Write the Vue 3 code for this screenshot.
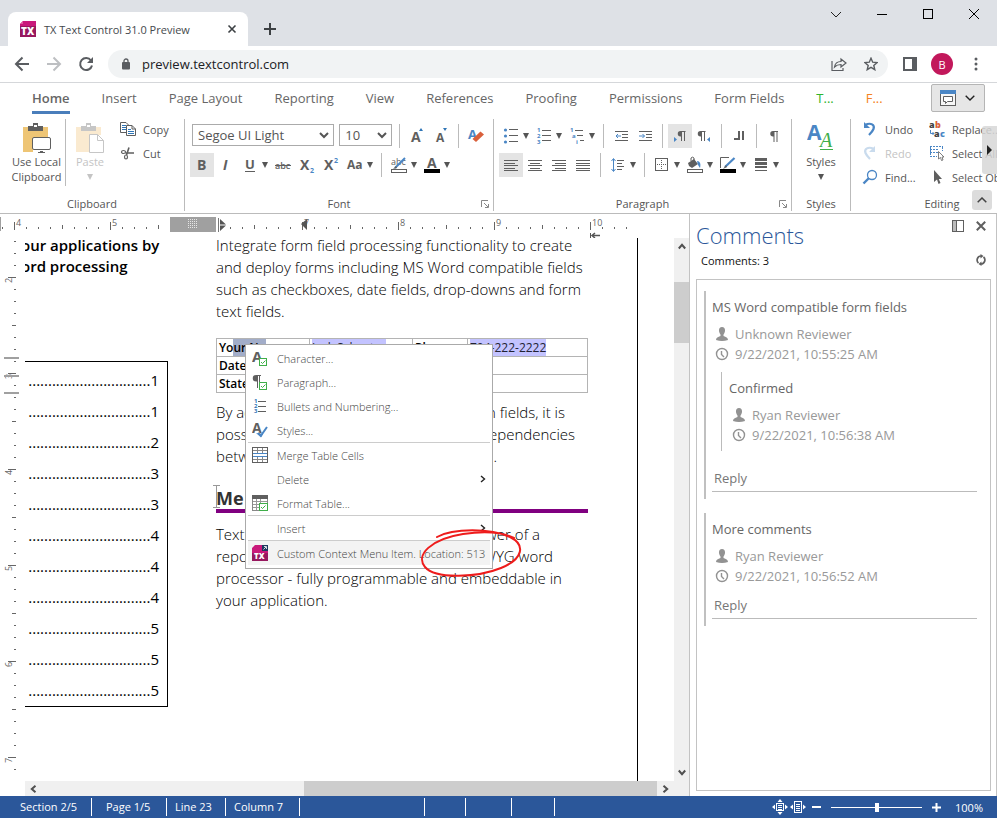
<script setup>
import { h, ref } from 'vue'

const G = '#5f5f5f'
const B = '#2e75b6'
const lines = (list, c = G) =>
  list.map(([x, y, w]) => `<rect x="${x}" y="${y}" width="${w}" height="1" fill="${c}"/>`).join('')

const icons = {
  logo: [16, 16, `<path d="M3 0H16V16H0V3z" fill="#c9197b"/><path d="M0 5H16V16H0z" fill="#97185f"/><path d="M0 3L3 0V3z" fill="#e3579f"/><text x="1" y="14" font-size="10" font-weight="800" fill="#fff">TX</text>`],
  logoDoc: [16, 16, `<path d="M3 0H11V4H16V16H0V3z" fill="#c9197b"/><path d="M0 8H16V16H0z" fill="#97185f"/><rect x="10" y="0" width="6" height="6" fill="#1e3a5f"/><path d="M11.500 4.500L14 2M12 1.500h2.500V4" stroke="#fff" fill="none" stroke-width=".8"/><text x="2" y="14" font-size="8" font-weight="800" fill="#fff">TX</text>`],
  tabClose: [10, 10, `<path d="M1.500 1.500L8.500 8.500M8.500 1.500L1.500 8.500" stroke="#3c4043" stroke-width="1.600"/>`],
  plus: [12, 12, `<path d="M6 0V12M0 6H12" stroke="#3c4043" stroke-width="2"/>`],
  winDown: [12, 12, `<path d="M1 4L6 9L11 4" fill="none" stroke="#222"/>`],
  winMin: [12, 12, `<rect x="1" y="6" width="10" height="1" fill="#000"/>`],
  winMax: [12, 12, `<rect x="1.500" y="1.500" width="9" height="9" fill="none" stroke="#000"/>`],
  winClose: [12, 12, `<path d="M1 1L11 11M11 1L1 11" stroke="#000"/>`],
  back: [16, 16, `<path d="M15 8H2M8.500 1.500L2 8L8.500 14.500" fill="none" stroke="#5a5d61" stroke-width="2"/>`],
  forward: [16, 16, `<path d="M1 8H14M7.500 1.500L14 8L7.500 14.500" fill="none" stroke="#bdbfc2" stroke-width="2"/>`],
  reload: [16, 16, `<path d="M13 4.500A6 6 0 1 0 14 9.500" fill="none" stroke="#5a5d61" stroke-width="2"/><path d="M15 1V7H9z" fill="#5a5d61"/>`],
  lock: [10, 12, `<rect x="1" y="4" width="8" height="7.500" rx="1" fill="#5a5d61"/><path d="M3 5V3a2 2 0 0 1 4 0V5" fill="none" stroke="#5a5d61" stroke-width="1.300"/>`],
  share: [16, 16, `<path d="M1 5V14.500H12V12" fill="none" stroke="#5a5d61" stroke-width="1.200"/><path d="M3.500 11C4 7.500 6.500 5.500 10 5.500V3L15 7L10 11V8.500C7.500 8.500 5.500 9 3.500 11z" fill="none" stroke="#5a5d61" stroke-width="1.200"/>`],
  star: [14, 14, `<path d="M7 1.200L8.700 5.200L13 5.600L9.800 8.400L10.800 12.700L7 10.400L3.200 12.700L4.200 8.400L1 5.600L5.300 5.200z" fill="none" stroke="#5a5d61" stroke-width="1.400"/>`],
  side: [14, 14, `<rect x="1" y="1" width="12" height="12" fill="none" stroke="#5a5d61" stroke-width="2"/><rect x="9" y="1" width="4" height="12" fill="#5a5d61"/>`],
  dots: [4, 14, `<circle cx="2" cy="2" r="1.500" fill="#5a5d61"/><circle cx="2" cy="7" r="1.500" fill="#5a5d61"/><circle cx="2" cy="12" r="1.500" fill="#5a5d61"/>`],
  comment: [16, 16, `<rect x=".5" y=".5" width="15" height="15" fill="#f6f6f6" stroke="${G}"/><rect width="16" height="4" fill="#4a86c5"/><path d="M3.500 6.500H12.500V11.500H7.500L5.500 13.500V11.500H3.500z" fill="#fff" stroke="${G}"/>`],
  chev: [10, 6, `<path d="M.7 .7L5 5L9.300 .7" fill="none" stroke="#222" stroke-width="1.400"/>`],
  selChev: [10, 7, `<path d="M1 1L5 5L9 1" fill="none" stroke="#555" stroke-width="2"/>`],
  up: [10, 6, `<path d="M.7 5.300L5 1L9.300 5.300" fill="none" stroke="#444" stroke-width="1.500"/>`],
  clip: [28, 30, `<path d="M0 4H25V15H10V29H0z" fill="#eec575"/><path d="M5 3H10V0H15V3H20V8H5z" fill="${G}"/><rect x="11" y="2" width="3" height="2" fill="#fff"/><rect x="9.500" y="14.500" width="18" height="12" rx="1.500" fill="#fff" stroke="${G}"/><path d="M15 29.500h7" stroke="${G}"/><path d="M17 28.500h3" stroke="${G}"/>`],
  paste: [28, 30, `<path d="M0 4H25V12H13V29H0z" fill="#faead0"/><path d="M5 3H10V0H15V3H20V8H5z" fill="#c6c6c6"/><rect x="11" y="2" width="3" height="2" fill="#fff"/><path d="M13.500 11.500H21.500L27.500 17.500V29.500H13.500zM21.500 11.500V17.500H27.500" fill="#fff" stroke="#c6c6c6"/>`],
  copy: [16, 16, `<path d="M.5 1.500H6L8.500 4V11.500H.5z" fill="#fff" stroke="${G}"/>${lines([[2, 4, 4], [2, 6, 4], [2, 8, 4]], B)}<path d="M6.500 4.500H12L15.500 8V14.500H6.500z" fill="#fff" stroke="${G}"/><path d="M12 4.500V8H15.500" fill="none" stroke="${G}"/>${lines([[8, 8, 3], [8, 10, 6], [8, 12, 6]], B)}`],
  cut: [16, 16, `<ellipse cx="3.500" cy="7" rx="2" ry="1.500" fill="none" stroke="${G}" stroke-width="1.200"/><ellipse cx="6" cy="12" rx="1.500" ry="2" fill="none" stroke="${G}" stroke-width="1.200"/><path d="M5.500 8H14M6.500 10L9 2.500" stroke="${G}" stroke-width="1.600"/>`],
  grow: [18, 18, `<text x="3" y="15" font-size="14" font-weight="700" fill="${G}">A</text><path d="M11 4L13 1L15 4z" fill="${B}"/>`],
  shrink: [18, 18, `<text x="4" y="15" font-size="12" font-weight="700" fill="${G}">A</text><path d="M11 1L13 4L15 1z" fill="${B}"/>`],
  clear: [18, 18, `<text x="1" y="12" font-size="13" font-weight="700" fill="#4a86c5">A</text><path d="M5.500 12L13.500 4.500L17 7.500L9 15z" fill="#d9603b"/>`],
  bold: [18, 18, `<text x="4" y="14" font-size="14" font-weight="700" fill="${G}">B</text>`],
  italic: [18, 18, `<text x="6" y="14" font-size="14" font-weight="700" font-style="italic" fill="${G}">I</text>`],
  under: [18, 18, `<text x="4" y="13" font-size="13" font-weight="700" fill="${G}">U</text><rect x="4" y="15" width="10" height="1" fill="${G}"/>`],
  strike: [18, 18, `<text x="1" y="13" font-size="9" font-weight="600" fill="${G}">abc</text><rect x="1" y="9" width="16" height="1" fill="${G}"/>`],
  sub: [18, 18, `<text x="2" y="14" font-size="14" font-weight="700" fill="${G}">X</text><text x="12" y="17" font-size="7" font-weight="700" fill="#4a86c5">2</text>`],
  sup: [18, 18, `<text x="2" y="14" font-size="14" font-weight="700" fill="${G}">X</text><text x="12" y="7" font-size="7" font-weight="700" fill="#4a86c5">2</text>`],
  aa: [18, 18, `<text x="1" y="13" font-size="12" font-weight="700" fill="${G}">Aa</text>`],
  hilite: [18, 18, `<text x="1" y="9" font-size="9" fill="${G}">abc</text><path d="M5 12L15 2" stroke="#4a86c5" stroke-width="2"/><path d="M3 13L6 10L7 12z" fill="${G}"/><rect x="1.500" y="13.500" width="15" height="3" fill="#fff" stroke="${G}"/>`],
  color: [18, 18, `<text x="4" y="12" font-size="14" font-weight="700" fill="${G}">A</text><rect x="1" y="13" width="16" height="4" fill="#000"/>`],
  bullets: [18, 18, `<g fill="#4a86c5"><circle cx="3.500" cy="3" r="1.600"/><circle cx="3.500" cy="9" r="1.600"/><circle cx="3.500" cy="15" r="1.600"/></g>${lines([[7, 2, 9], [7, 8, 9], [7, 14, 9]])}`],
  numbers: [18, 18, `<g font-size="6" font-weight="700" fill="#4a86c5"><text x="2" y="5">1</text><text x="2" y="11">2</text><text x="2" y="17">3</text></g>${lines([[7, 3, 9], [7, 8, 9], [7, 13, 9]])}`],
  multi: [18, 18, `<g font-size="6" font-weight="700" fill="#4a86c5"><text x="2" y="5">1</text><text x="4" y="11">a</text><text x="8" y="17">i</text></g>${lines([[7, 3, 8], [9, 8, 6], [12, 13, 4]])}`],
  outdent: [18, 18, `${lines([[3, 4, 13], [10, 7, 6], [10, 10, 6], [3, 13, 13]])}<path d="M9 9H4M6 7L4 9L6 11" fill="none" stroke="#4a86c5"/>`],
  indent: [18, 18, `${lines([[3, 4, 13], [10, 7, 6], [10, 10, 6], [3, 13, 13]])}<path d="M3 9H8.500M6.500 7L8.500 9L6.500 11" fill="none" stroke="#4a86c5"/>`],
  ltr: [18, 18, `<path d="M14.500 4H9.500A2.700 2.700 0 0 0 9.500 9.500H10V14H11V5H13V14H14V5H14.500z" fill="${G}"/><path d="M3 10V15L6 12.500z" fill="#4a86c5"/>`],
  rtl: [18, 18, `<path d="M10.500 4H5.500A2.700 2.700 0 0 0 5.500 9.500H6V14H7V5H9V14H10V5H10.500z" fill="${G}"/><path d="M15 10V15L12 12.500z" fill="#4a86c5"/>`],
  tabs: [18, 18, `<path d="M4 12H10M9 4V13M13 4V13" stroke="${G}" stroke-width="2" fill="none"/>`],
  pilcrow: [18, 18, `<path d="M13 4H8A2.700 2.700 0 0 0 8 9.500H8.500V15H9.500V5H11.500V15H12.500V5H13z" fill="${G}"/>`],
  left: [18, 18, lines([[2, 4, 14], [2, 7, 11], [2, 9, 14], [2, 12, 11], [2, 14, 14]])],
  center: [18, 18, lines([[2, 4, 14], [4, 7, 10], [2, 9, 14], [4, 12, 10], [2, 14, 14]])],
  right: [18, 18, lines([[2, 4, 14], [5, 7, 11], [2, 9, 14], [5, 12, 11], [2, 14, 14]])],
  justify: [18, 18, lines([[2, 4, 14], [2, 7, 14], [2, 9, 14], [2, 12, 14], [2, 14, 14]])],
  spacing: [18, 18, `${lines([[8, 4, 7], [8, 7, 5], [8, 10, 7], [8, 13, 5]])}<path d="M4.500 3V15M2.500 5L4.500 2.500L6.500 5M2.500 13L4.500 15.500L6.500 13" fill="none" stroke="#4a86c5"/>`],
  border: [18, 18, `<rect x="2.500" y="2.500" width="12" height="12" fill="none" stroke="${G}"/><path d="M8.500 4V14M4 8.500H14" stroke="${G}" stroke-dasharray="1 1"/>`],
  bucket: [18, 18, `<path d="M2 7L8 3L12 8L6 12L3 10z" fill="${G}"/><path d="M5 5V2a2 2 0 0 1 3 0V6" fill="none" stroke="${G}"/><path d="M11 5C14 5 15 8 14 12L12 9z" fill="#4a86c5"/><rect x="1.500" y="13.500" width="15" height="3" fill="#fff" stroke="${G}"/>`],
  pen: [18, 18, `<path d="M10 1.500H1.500V12" fill="none" stroke="${G}"/><path d="M6 11L15.500 2" stroke="#4a86c5" stroke-width="2.200"/><path d="M4 13L7 9L8 11z" fill="${G}"/><rect x="1" y="13" width="16" height="4" fill="#000"/>`],
  weight: [18, 18, `<g fill="${G}"><rect x="3" y="2" width="12" height="3"/><rect x="3" y="6" width="12" height="3"/><rect x="3" y="10" width="12" height="2"/><rect x="3" y="14" width="12" height="1"/></g>`],
  styles: [28, 28, `<text x="0" y="17" font-size="21" font-weight="700" fill="#4a86c5">A</text><text x="13" y="24" font-size="20" font-family="Liberation Serif" font-style="italic" fill="#3fae49">A</text><rect x="13" y="26" width="13" height="1" fill="#3fae49"/>`],
  undo: [16, 16, `<path d="M3 4C9 1 13 4 11.500 8C10.500 10.500 9 12 7 14" fill="none" stroke="#4a86c5" stroke-width="2.200"/><path d="M2 1V7H8z" fill="#4a86c5"/>`],
  redo: [16, 16, `<path d="M12 4C6 1 2 4 3.500 8C4.500 10.500 6 12 8 14" fill="none" stroke="#c9dbed" stroke-width="2.200"/><path d="M13 1V7H7z" fill="#c9dbed"/>`],
  find: [16, 16, `<circle cx="10" cy="6" r="4.500" fill="none" stroke="#4a86c5" stroke-width="1.300"/><path d="M7 9L1.500 14.500" stroke="#4a86c5" stroke-width="2.400"/>`],
  replace: [16, 16, `<text x="0" y="7" font-size="9" font-weight="800" fill="#444">a</text><text x="6" y="7" font-size="9" font-weight="800" fill="#d9603b">b</text><text x="5" y="16" font-size="9" font-weight="800" fill="#444">a</text><text x="11" y="16" font-size="9" font-weight="800" fill="#4a86c5">c</text><path d="M1.500 9V12.500H5M3.500 11L5 12.500L3.500 14" fill="none" stroke="#4a86c5"/>`],
  selectAll: [16, 16, `<path d="M1 1.500H14M1 4.500H9M1 7.500H9M1 11.500H8M1.500 2V12M13.500 2V6" stroke="#4a86c5" stroke-dasharray="2 1" fill="none"/><path d="M9.500 6.500V14L11.500 12.500L12.500 15.500L14 15L13 12H15z" fill="#fff" stroke="${G}" stroke-width=".8"/>`],
  cursor: [16, 16, `<path d="M5 1V13L8 10.500L9.500 15L11.500 14L9.800 10H13z" fill="${G}"/>`],
  launcher: [8, 8, `<path d="M.5 7V.5H7" fill="none" stroke="#888"/><path d="M3 3L7 7M7.500 4V7.500H4" fill="none" stroke="#888"/>`],
  ctxChar: [16, 16, `<text x="0" y="12" font-size="15" font-weight="700" fill="${G}">A</text><rect x="7.500" y="8.500" width="7" height="7" fill="#fff" stroke="#3fae49"/><path d="M9 12L10.500 13.500L13.500 10.500" fill="none" stroke="#3fae49"/>`],
  ctxPara: [16, 16, `<path d="M9 1H4A3 3 0 0 0 4 7.500H5V14H6V2H7V14H8V2H9z" fill="${G}"/><rect x="7.500" y="8.500" width="7" height="7" fill="#fff" stroke="#3fae49"/><path d="M9 12L10.500 13.500L13.500 10.500" fill="none" stroke="#3fae49"/>`],
  ctxList: [16, 16, `<g font-size="6" font-weight="700" fill="${B}"><text x="2" y="5">1</text><text x="2" y="10">2</text><text x="2" y="15">3</text></g>${lines([[6, 3, 8], [6, 8, 8], [6, 13, 8]])}`],
  ctxStyle: [16, 16, `<text x="0" y="11" font-size="14" font-weight="700" fill="${G}">A</text><path d="M6 11L9 13.500L15 5" fill="none" stroke="#4a86c5" stroke-width="2"/><path d="M4 11L9 15.500L11 12z" fill="#4a86c5"/>`],
  ctxMerge: [16, 16, `<rect x=".5" y=".5" width="15" height="15" fill="#fff" stroke="${G}"/><path d="M1 3.500H15M1 12.500H15M5.500 1V6M10.500 1V6M5.500 10V15M10.500 10V15" stroke="#888"/><path d="M1 6.500H15M1 9.500H15" stroke="#4a86c5"/>`],
  ctxTable: [16, 16, `<rect x=".5" y=".5" width="15" height="15" fill="#fff" stroke="#888"/><rect width="16" height="4" fill="${G}"/><path d="M1 6.500H15M1 9.500H15M1 12.500H15M4.500 4V15M8.500 4V15" stroke="#999"/><rect x="7.500" y="8.500" width="8" height="7" fill="#fff" stroke="#3fae49"/><path d="M9 12L10.500 13.500L13.500 10.500" fill="none" stroke="#3fae49"/>`],
  arrowR: [6, 8, `<path d="M1 1L4.500 4L1 7" fill="none" stroke="#222" stroke-width="1.400"/>`],
  scrollL: [7, 8, `<path d="M5.500 .8L1.800 4L5.500 7.200" fill="none" stroke="#505050" stroke-width="2"/>`],
  scrollR: [7, 8, `<path d="M1.500 .8L5.200 4L1.500 7.200" fill="none" stroke="#505050" stroke-width="2"/>`],
  scrollU: [8, 7, `<path d="M.8 5.500L4 1.800L7.200 5.500" fill="none" stroke="#505050" stroke-width="2"/>`],
  scrollD: [8, 7, `<path d="M.8 1.500L4 5.200L7.200 1.500" fill="none" stroke="#505050" stroke-width="2"/>`],
  user: [14, 14, `<path d="M7 0C9.300 0 10.200 1.700 10 4C9.900 5.600 9 6.800 8.500 7.500V9C11 10 13 10.500 13 13C9 14.300 5 14.300 1 13C1 10.500 3 10 5.500 9V7.500C5 6.800 4.100 5.600 4 4C3.800 1.700 4.700 0 7 0z" fill="#929292"/>`],
  clock: [14, 14, `<circle cx="7" cy="7" r="5.500" fill="none" stroke="#929292" stroke-width="1.400"/><path d="M6.500 4V7.500L9 10" fill="none" stroke="#929292" stroke-width="1.400"/>`],
  panel: [12, 12, `<rect x=".5" y=".5" width="11" height="11" fill="#fff" stroke="${G}"/><rect x="1" y="1" width="3" height="10" fill="#bbb"/><path d="M4.500 1V11" stroke="${G}"/>`],
  close: [10, 10, `<path d="M.8 .8L9.200 9.200M9.200 .8L.8 9.200" stroke="${G}" stroke-width="2"/>`],
  refresh: [10, 12, `<path d="M2.500 9A4 4 0 0 1 5 2M7.500 3A4 4 0 0 1 5 10" fill="none" stroke="${G}" stroke-width="1.700"/><path d="M4.500 0L7.500 2L4.500 4.500zM5.500 7.500L2.500 10L5.500 12z" fill="${G}"/>`],
  fitPage: [16, 16, `<rect x="4.500" y="4.500" width="7" height="7" fill="none" stroke="#fff"/>${lines([[6, 6, 4], [6, 8, 4], [6, 10, 4]], '#fff')}<path d="M8 0L10.500 3H5.500zM8 16L10.500 13H5.500zM0 8L3 5.500V10.500zM16 8L13 5.500V10.500z" fill="#fff"/>`],
  fitWidth: [16, 16, `<rect x="4.500" y="2.500" width="7" height="11" fill="none" stroke="#fff"/>${lines([[6, 5, 4], [6, 7, 4], [6, 9, 4], [6, 11, 4]], '#fff')}<path d="M0 8L3 5.500V10.500zM16 8L13 5.500V10.500z" fill="#fff"/>`],
  minus: [9, 9, `<rect x="0" y="3" width="9" height="2" fill="#fff"/>`],
  add: [9, 9, `<path d="M4.500 0V9M0 4.500H9" stroke="#fff" stroke-width="2"/>`]
}

const Icon = (props) => {
  const [w, ht, body] = icons[props.n]
  return h('svg', { width: w, height: ht, viewBox: `0 0 ${w} ${ht}`, 'aria-hidden': 'true', innerHTML: body })
}
Icon.props = ['n']

const tabs = ['Home', 'Insert', 'Page Layout', 'Reporting', 'View', 'References', 'Proofing', 'Permissions', 'Form Fields', 'T...', 'F...']
const active = ref('Home')

const fontRow1 = [{ sep: 1 }, { n: 'grow' }, { n: 'shrink' }, { sep: 1 }, { n: 'clear' }]
const fontRow2 = [{ n: 'bold', on: 1 }, { n: 'italic' }, { n: 'under', drop: 1 }, { n: 'strike' }, { n: 'sub' }, { n: 'sup' }, { n: 'aa', drop: 1 }, { sep: 1 }, { n: 'hilite', drop: 1 }, { n: 'color', drop: 1 }]
const paraRow1 = [{ n: 'bullets', drop: 1 }, { n: 'numbers', drop: 1 }, { n: 'multi', drop: 1 }, { sep: 1 }, { n: 'outdent' }, { n: 'indent' }, { sep: 1 }, { n: 'ltr', on: 1 }, { n: 'rtl' }, { sep: 1 }, { n: 'tabs' }, { sep: 1 }, { n: 'pilcrow' }]
const paraRow2 = [{ n: 'left', on: 1 }, { n: 'center' }, { n: 'right' }, { n: 'justify' }, { sep: 1 }, { n: 'spacing', drop: 1 }, { sep: 1 }, { n: 'border', drop: 1 }, { n: 'bucket', drop: 1 }, { n: 'pen', drop: 1 }, { n: 'weight', drop: 1 }]

const Tools = (props) =>
  h('div', { class: 'tools' }, props.items.map((t) =>
    t.sep
      ? h('span', { class: 'tsep' })
      : h('button', { class: ['tool', { on: t.on, drop: t.drop }], 'aria-label': t.n }, [h('span', { class: 'glyph' }, [h(Icon, { n: t.n })]), t.drop ? h('span', { class: 'tri' }) : null])
  ))
Tools.props = ['items']

const toc = [1, 1, 2, 3, 3, 4, 4, 4, 5, 5, 5]
const dots = '.'.repeat(31)

const hTicks = []
for (let i = -1; i <= 51; i++) {
  const x = 14 + i * 12
  if (x > 165 && x < 222) continue
  hTicks.push({ x, kind: i % 8 === 0 ? 2 : i % 4 === 0 ? 1 : 0, label: i % 8 === 0 ? 4 + i / 8 : '' })
}
const vTicks = []
for (let i = 0; i <= 46; i++) {
  const k = i - 3
  vTicks.push({ y: 27 + i * 12, kind: k % 8 === 0 ? 2 : k % 4 === 0 ? 1 : 0, label: k % 8 === 0 ? 2 + k / 8 : '' })
}

const menu = [
  { t: 'Character...', n: 'ctxChar' },
  { t: 'Paragraph...', n: 'ctxPara' },
  { t: 'Bullets and Numbering...', n: 'ctxList' },
  { t: 'Styles...', n: 'ctxStyle' },
  { t: 'Merge Table Cells', n: 'ctxMerge', top: 1 },
  { t: 'Delete', sub: 1 },
  { t: 'Format Table...', n: 'ctxTable' },
  { t: 'Insert', sub: 1, top: 1 },
  { t: 'Custom Context Menu Item. Location: 513', n: 'logoDoc', top: 1, on: 1 }
]

const comments = [
  {
    title: 'MS Word compatible form fields', who: 'Unknown Reviewer', when: '9/22/2021, 10:55:25 AM',
    replies: [{ title: 'Confirmed', who: 'Ryan Reviewer', when: '9/22/2021, 10:56:38 AM' }]
  },
  { title: 'More comments', who: 'Ryan Reviewer', when: '9/22/2021, 10:56:52 AM', replies: [] }
]
const zoom = ref(50)
</script>

<template>
  <div class="app">
    <header class="strip">
      <div class="tab">
        <Icon n="logo" />
        <span class="tab-title">TX Text Control 31.0 Preview</span>
        <button aria-label="Close tab"><Icon n="tabClose" /></button>
      </div>
      <button class="new-tab" aria-label="New tab"><Icon n="plus" /></button>
      <div class="win">
        <button v-for="n in ['winDown', 'winMin', 'winMax', 'winClose']" :key="n" :aria-label="n"><Icon :n="n" /></button>
      </div>
    </header>

    <div class="addressbar">
      <button class="nav" aria-label="Back"><Icon n="back" /></button>
      <button class="nav" aria-label="Forward"><Icon n="forward" /></button>
      <button class="nav" aria-label="Reload"><Icon n="reload" /></button>
      <div class="omnibox">
        <Icon n="lock" />
        <input aria-label="Address" value="preview.textcontrol.com" />
        <button aria-label="Share"><Icon n="share" /></button>
        <button aria-label="Bookmark"><Icon n="star" /></button>
      </div>
      <button class="side" aria-label="Side panel"><Icon n="side" /></button>
      <button class="avatar">B</button>
      <button class="more" aria-label="More"><Icon n="dots" /></button>
    </div>

    <nav class="rtabs">
      <button v-for="t in tabs" :key="t" :class="{ active: t === active, green: t === 'T...', orange: t === 'F...' }" @click="active = t"><span>{{ t }}</span></button>
      <button class="view-btn" aria-label="Comments view"><Icon n="comment" /><Icon n="chev" /></button>
    </nav>

    <section class="ribbon">
      <div class="group g-clip">
        <div class="body">
          <button class="big local"><Icon n="clip" /><span>Use Local<br />Clipboard</span></button>
          <button class="big dis"><Icon n="paste" /><span>Paste</span><i class="tri"></i></button>
          <div class="stack">
            <button><Icon n="copy" />Copy</button>
            <button><Icon n="cut" />Cut</button>
          </div>
        </div>
        <div class="glabel">Clipboard</div>
      </div>

      <div class="group g-font">
        <div class="rows">
          <div class="row">
            <div class="sel wide">
              <select aria-label="Font"><option>Segoe UI Light</option></select>
              <Icon n="selChev" />
            </div>
            <div class="sel">
              <select aria-label="Font size"><option>10</option></select>
              <Icon n="selChev" />
            </div>
            <Tools :items="fontRow1" />
          </div>
          <Tools :items="fontRow2" />
        </div>
        <div class="glabel">Font</div>
        <button class="launch" aria-label="Font dialog"><Icon n="launcher" /></button>
      </div>

      <div class="group g-para">
        <div class="rows">
          <Tools :items="paraRow1" />
          <Tools :items="paraRow2" />
        </div>
        <div class="glabel">Paragraph</div>
        <button class="launch" aria-label="Paragraph dialog"><Icon n="launcher" /></button>
      </div>

      <div class="group g-styles">
        <div class="body">
          <button class="big"><Icon n="styles" /><span>Styles</span><i class="tri"></i></button>
        </div>
        <div class="glabel">Styles</div>
      </div>

      <div class="group g-edit">
        <div class="body">
          <div class="stack">
            <button><Icon n="undo" />Undo</button>
            <button class="dis"><Icon n="redo" />Redo</button>
            <button><Icon n="find" />Find...</button>
          </div>
          <div class="stack">
            <button><Icon n="replace" />Replace...</button>
            <button><Icon n="selectAll" />Select All</button>
            <button><Icon n="cursor" />Select Objects</button>
          </div>
        </div>
        <div class="glabel">Editing</div>
      </div>
      <button class="scroll-right" aria-label="Scroll ribbon"><span></span></button>
      <button class="collapse" aria-label="Collapse ribbon"><Icon n="up" /></button>
    </section>

    <main class="work">
      <div class="editor">
        <svg class="hruler" height="24" width="100%">
          <rect x="0" y="3" width="1" height="14" fill="#a0a0a0" />
          <rect x="170" y="3" width="46" height="15" fill="#a0a0a0" />
          <g fill="#e6e6e6">
            <template v-for="r in 5" :key="r"><rect v-for="c in 5" :key="c" :x="186 + c * 2" :y="3 + r * 2" width="1" height="1" /></template>
          </g>
          <g v-for="t in hTicks" :key="t.x">
            <rect :x="t.x" :y="t.kind === 2 ? 8 : t.kind ? 11 : 13" width="1" :height="t.kind === 2 ? 8 : t.kind ? 4 : 2" fill="#666" />
            <text v-if="t.label" :x="t.x + 2" y="12" font-size="9" fill="#666">{{ t.label }}</text>
          </g>
          <path d="M218.500 4V18" stroke="#777" />
          <path d="M220 5L226 10.500H220zM220 11.500H226L220 17z" fill="#555" />
          <path d="M307 5V16L301 10z" fill="#555" />
          <path d="M590.500 19V24" stroke="#555" />
          <path d="M592 21.500H600M595 19L592 21.500L595 24" fill="none" stroke="#555" stroke-width="1.500" />
        </svg>
        <div class="mid">
          <svg class="vruler" width="25" height="100%">
            <g transform="translate(0,-24)">
              <g v-for="t in vTicks" :key="t.y">
                <rect :x="t.kind === 2 ? 8 : t.kind ? 12 : 14" :y="t.y" :width="t.kind === 2 ? 8 : t.kind ? 4 : 2" height="1" fill="#666" />
                <text v-if="t.label" :transform="`translate(12,${t.y + 6}) rotate(-90)`" font-size="9" fill="#666">{{ t.label }}</text>
              </g>
              <g fill="#a0a0a0"><rect x="4" y="143" width="15" height="2" /><rect x="4" y="161" width="15" height="2" /><rect x="4" y="178" width="15" height="2" /></g>
              <path d="M20 579.500H25M22.500 580V583" stroke="#444" fill="none" />
            </g>
          </svg>
          <div class="view">
            <div class="page">
              <div class="col-left">
                <h4>our applications by<br />ord processing</h4>
                <ol class="toc">
                  <li v-for="(n, i) in toc" :key="i"><span>{{ dots }}</span><b>{{ n }}</b></li>
                </ol>
              </div>
              <article class="col-right">
                <p>Integrate form field processing functionality to create<br />and deploy forms including MS Word compatible fields<br />such as checkboxes, date fields, drop-downs and form<br />text fields.</p>
                <table>
                  <tbody>
                    <tr><td class="c1">Yo<mark class="pick">ur Na</mark></td><td class="c2"><mark>Jack Schuster</mark></td><td class="c3">Phone</td><td><mark>704-222-2222</mark></td></tr>
                    <tr><td colspan="4">Date</td></tr>
                    <tr><td colspan="4">State</td></tr>
                  </tbody>
                </table>
                <p><span class="split first"><span>By ad</span><span>n fields, it is</span></span><span class="split"><span>possi</span><span>ependencies</span></span><span class="split end"><span>betw</span><span>.</span></span></p>
                <h2>Me</h2>
                <p class="last"><span class="split over"><span>Text</span><span>wer of a</span></span><span class="split sys"><span>repo</span><span>WYG word</span></span>processor - fully programmable and embeddable in<br />your application.</p>
              </article>
            </div>

            <div class="menu">
              <button v-for="m in menu" :key="m.t" :class="{ top: m.top, on: m.on }">
                <span class="mi"><Icon v-if="m.n" :n="m.n" /></span>
                <span class="mt">{{ m.t }}</span>
                <Icon v-if="m.sub" n="arrowR" />
              </button>
            </div>
            <svg class="ibeam" width="7" height="24" viewBox="0 0 7 24"><path d="M0 .5H7M0 22.500H7M3.500 1V22" stroke="#999" /></svg>
            <svg class="ring" width="110" height="60" viewBox="0 0 110 60">
              <path d="M20 11C36 2 74 2 93 11C109 19 106 33 84 42C62 51 19 54 8 41C-2 29 14 13 46 8C66 5 85 6 97 12" fill="none" stroke="#ee1c1c" stroke-width="2" stroke-linecap="round" />
            </svg>
          </div>
          <div class="vscroll">
            <button aria-label="Scroll up"><Icon n="scrollU" /></button>
            <span class="vthumb"></span>
            <button aria-label="Scroll down"><Icon n="scrollD" /></button>
          </div>
        </div>
        <div class="hscroll">
          <button aria-label="Scroll left"><Icon n="scrollL" /></button>
          <span class="hthumb"></span>
          <button aria-label="Scroll right"><Icon n="scrollR" /></button>
        </div>
      </div>

      <aside class="panel">
        <div class="phead">
          <h1>Comments</h1>
          <button aria-label="Dock"><Icon n="panel" /></button>
          <button aria-label="Close"><Icon n="close" /></button>
        </div>
        <div class="pcount"><span>Comments: 3</span><button aria-label="Refresh"><Icon n="refresh" /></button></div>
        <div class="plist">
          <section v-for="(c, i) in comments" :key="i" class="cmt">
            <h3>{{ c.title }}</h3>
            <p><Icon n="user" />{{ c.who }}</p>
            <p><Icon n="clock" />{{ c.when }}</p>
            <div v-for="r in c.replies" :key="r.title" class="reply">
              <h3>{{ r.title }}</h3>
              <p><Icon n="user" />{{ r.who }}</p>
              <p><Icon n="clock" />{{ r.when }}</p>
            </div>
            <input aria-label="Reply" placeholder="Reply" />
          </section>
        </div>
      </aside>
    </main>

    <footer class="status">
      <span class="s1">Section 2/5</span><span class="s2">Page 1/5</span><span class="s3">Line 23</span><span class="s4">Column 7</span>
      <span class="s5"></span><span class="s6"></span><span class="s7"></span><span class="s8"></span>
      <div class="zoom">
        <button aria-label="Fit page"><Icon n="fitPage" /></button>
        <button aria-label="Fit width"><Icon n="fitWidth" /></button>
        <button class="zm" aria-label="Zoom out"><Icon n="minus" /></button>
        <input v-model="zoom" type="range" min="0" max="100" aria-label="Zoom" />
        <button class="zp" aria-label="Zoom in"><Icon n="add" /></button>
        <output>100%</output>
      </div>
    </footer>
  </div>
</template>

<style>
body { margin: 0; }
.tools { display: flex; align-items: center; height: 24px; }
.tool { display: flex; align-items: center; width: 24px; height: 24px; padding: 0; border: 0; background: none; font: inherit; }
.tool.drop { width: 33px; }
.tool.on { background: #e4e4e4; }
.glyph { width: 24px; display: flex; justify-content: center; flex: none; }
.tsep { width: 1px; height: 24px; margin: 0 5px; background: #bbb; }
.tri { width: 0; height: 0; border: 3px solid transparent; border-top: 6px solid #555; border-bottom: 0; }
</style>

<style scoped>
* { box-sizing: border-box; }
.app { height: 100vh; min-height: 600px; display: flex; flex-direction: column; overflow: hidden; background: #fff; color: #555; font: 11px/15px "Open Sans", "Noto Sans", sans-serif; }
svg { display: block; flex: none; }
button { padding: 0; border: 0; background: none; color: inherit; font: inherit; cursor: pointer; display: flex; align-items: center; }
h1, h2, h3, h4, p, ol { margin: 0; padding: 0; font-weight: inherit; }

.strip { display: flex; align-items: flex-end; height: 46px; flex: none; background: #dee1e6; padding-left: 8px; }
.tab { display: flex; align-items: center; gap: 8px; width: 240px; height: 34px; padding: 0 11px 0 12px; border-radius: 8px 8px 0 0; background: #fff; color: #45494d; }
.tab-title { flex: 1; white-space: nowrap; }
.new-tab { height: 34px; padding: 0 16px; }
.win { margin-left: auto; align-self: flex-start; display: flex; }
.win button { width: 46px; height: 28px; justify-content: center; }

.addressbar { display: flex; align-items: center; height: 37px; flex: none; padding: 0 17px 0 6px; border-bottom: 1px solid #d5d7da; }
.nav { width: 32px; justify-content: center; }
.omnibox { flex: 1; display: flex; align-items: center; height: 28px; margin-left: 6px; padding: 0 10px 0 13px; border-radius: 14px; background: #f1f3f4; }
.omnibox input { flex: 1; min-width: 0; border: 0; background: none; outline: 0; color: #202124; font: 13px/20px "Open Sans", sans-serif; padding: 0 11px; }
.omnibox button { margin-left: 17px; }
.omnibox button:first-of-type { margin-left: 0; }
.side { margin-left: 15px; }
.avatar { margin: 0 18px 0 14px; width: 22px; height: 22px; border-radius: 50%; background: #c2185b; color: #fff; justify-content: center; }
.more { width: 9px; justify-content: center; }

.rtabs { display: flex; align-items: stretch; height: 31px; flex: none; padding: 0 12px 0 16px; font-size: 13px; line-height: 18px; color: #666; }
.rtabs > button { padding: 0 16px; white-space: nowrap; }
.rtabs > button span { height: 31px; line-height: 31px; }
.rtabs .active span { font-weight: 600; border-bottom: 3px solid #4a7ebb; }
.rtabs .green { color: #2eb52e; }
.rtabs .orange { color: #f58220; }
.rtabs .view-btn { margin: 1px 0 2px auto; width: 54px; padding: 0 8px; gap: 9px; border: 1px solid #b5b5b5; background: #e6e6e6; border-radius: 2px; }

.ribbon { position: relative; display: flex; height: 100px; flex: none; padding: 5px 0 2px; border-bottom: 1px solid #bbb; overflow: hidden; }
.group { position: relative; display: flex; flex-direction: column; flex: none; border-right: 1px solid #bbb; white-space: nowrap; }
.group > :first-child { flex: 1; }
.glabel { height: 15px; text-align: center; }
.g-clip { width: 185px; }
.g-font { width: 309px; }
.g-para { width: 298px; }
.g-styles { width: 59px; }
.g-edit { width: 182px; border-right: 0; }
.body { display: flex; align-items: flex-start; }
.big { flex-direction: column; width: 48px; height: 67px; padding-top: 4px; text-align: center; }
.big span { margin-top: 1px; }
.big .tri { margin-top: 5px; }
.local { width: 66px; padding-left: 8px; border-right: 1px solid #bbb; }
.dis { color: #c4c4c4; }
.dis .tri { border-top-color: #c4c4c4; }
.stack { margin-top: -2px; padding-left: 6px; }
.stack button { height: 24px; gap: 7px; }
.g-styles .big { width: 58px; }
.g-styles .big span { margin-top: 3px; }
.g-edit .stack { padding-left: 11px; width: 67px; }
.g-edit .stack + .stack { width: 110px; }
.rows { display: flex; flex-direction: column; gap: 5px; padding: 5px 5px 0; }
.row { display: flex; height: 24px; }
.sel { display: grid; width: 53px; height: 22px; margin: 0 2px 0 3px; align-items: center; }
.wide { width: 143px; margin-left: 2px; }
.sel > * { grid-area: 1 / 1; }
.sel select { appearance: none; width: 100%; height: 22px; padding: 0 5px; border: 1px solid #ababab; border-radius: 0; background: #fff; color: #555; font: 13px/18px "Open Sans", sans-serif; }
.sel svg { justify-self: end; margin-right: 5px; pointer-events: none; }
.launch { position: absolute; right: 4px; bottom: 3px; }
.scroll-right { position: absolute; right: 0; top: 12px; width: 15px; height: 48px; border-radius: 3px 0 0 3px; background: rgba(215, 215, 215, .85); justify-content: center; }
.scroll-right span { border: 5px solid transparent; border-left: 5px solid #222; border-right: 0; }
.collapse { position: absolute; right: 5px; bottom: 3px; width: 20px; height: 20px; border-radius: 3px; background: #dcdcdc; justify-content: center; }

.work { flex: 1; min-height: 0; display: flex; }
.editor { flex: 1; min-width: 0; display: flex; flex-direction: column; border-right: 1px solid #c3c3c3; }
.mid { flex: 1; min-height: 0; display: flex; }
.view { position: relative; flex: 1; min-width: 0; overflow: hidden; color: #000; }
.page { display: flex; gap: 48px; width: 613px; height: 100%; border-right: 1px solid #000; }
.col-left { width: 143px; flex: none; overflow: hidden; }
.col-left h4 { margin: -3px 0 0 -4px; height: 126px; font-size: 15px; line-height: 21px; font-weight: 600; white-space: nowrap; }
.toc { list-style: none; height: 346px; border: 1px solid #000; border-left: 0; padding: 3px 8px 0 0; }
.toc li { display: flex; justify-content: flex-end; height: 31px; line-height: 31px; font-size: 15px; }
.toc b { font-weight: 400; }
.col-right { width: 372px; flex: none; font-size: 15px; font-weight: 300; line-height: 22px; white-space: nowrap; }
.col-right > p:first-child { height: 100px; margin-top: -4px; }
table { width: 372px; margin-top: 4px; table-layout: fixed; border-collapse: collapse; font-size: 12px; line-height: 17px; font-weight: 400; }
td { height: 18px; padding: 0 2px; border: 1px solid #b4b4b4; font-weight: 600; }
.c1 { width: 93px; }
.c2 { width: 103px; }
.c3 { width: 55px; }
mark { background: #c3c3ff; color: #223; font-weight: 400; }
.pick { background: #a2adc9; color: #000; font-weight: 600; }
table + p { margin-top: 8px; }
.split { display: flex; justify-content: space-between; padding-right: 13px; }
.first { padding-right: 23px; }
.end { padding-right: 91px; }
.over { padding-right: 48px; }
.sys { padding-right: 35px; }
.col-right h2 { margin-top: 19px; height: 27px; border-bottom: 4px solid #800080; font-size: 18px; line-height: 24px; font-weight: 700; color: #333; }
.last { margin-top: 10px; }

.menu { position: absolute; left: 220px; top: 106px; width: 248px; padding: 1px 2px 3px; background: #fff; border: 1px solid #aaa; color: #444; font-weight: 300; }
.menu button { width: 100%; height: 24px; padding: 0 4px; text-align: left; }
.menu .top { height: 25px; border-top: 1px solid #ccc; }
.menu .on { background: #f3f3f3; }
.mi { flex: none; width: 25px; }
.mt { flex: 1; white-space: nowrap; }
.ibeam { position: absolute; left: 188px; top: 247px; }
.ring { position: absolute; left: 392px; top: 288px; }

.vscroll { width: 15px; flex: none; display: flex; flex-direction: column; justify-content: space-between; background: #f0f0f0; }
.vscroll button { height: 17px; justify-content: center; }
.vthumb { height: 61px; margin: 27px 0 auto; background: #cdcdcd; }
.hscroll { display: flex; height: 15px; flex: none; margin-left: 25px; background: #f0f0f0; }
.hscroll button { width: 17px; justify-content: center; }
.hthumb { flex: 1; margin-left: 262px; background: #cdcdcd; }
.hscroll button:last-child { margin-right: 15px; }

.panel { width: 307px; flex: none; display: flex; flex-direction: column; padding: 6px 5px 5px 6px; border-right: 1px solid #c3c3c3; }
.phead { display: flex; align-items: flex-start; height: 32px; padding-right: 5px; }
.phead h1 { flex: 1; font-size: 22px; line-height: 30px; font-weight: 300; color: #2b579a; }
.phead button { margin-left: 12px; height: 12px; }
.pcount { display: flex; justify-content: space-between; align-items: center; height: 16px; padding: 0 5px; color: #111; }
.plist { flex: 1; margin-top: 11px; padding: 11px 13px 0 7px; border: 1px solid #c3c3c3; overflow: hidden; }
.cmt { border-left: 2px solid #c0c0c0; padding: 5px 0 7px 6px; margin-bottom: 14px; font-size: 13px; line-height: 20px; color: #999; }
.cmt h3 { margin-bottom: 6px; line-height: 22px; font-size: 13px; color: #666; }
.cmt p { display: flex; align-items: center; gap: 6px; height: 20px; padding-left: 3px; }
.reply { margin: 8px 0 2px 9px; padding: 5px 0 6px 7px; border-left: 1px solid #bbb; }
.cmt input { display: block; width: 100%; height: 27px; margin-top: 6px; padding: 0 0 0 2px; border: 0; border-bottom: 1px solid #bbb; outline: 0; background: none; font: 13px/20px "Open Sans", sans-serif; }
.reply + input { margin-top: 14px; }
.cmt input::placeholder { color: #777; opacity: 1; }

.status { display: flex; align-items: center; height: 22px; flex: none; background: #2b579a; color: #fff; white-space: nowrap; }
.status > span { height: 18px; line-height: 18px; border-right: 1px solid #fff; padding-left: 8px; }
.status .s1 { width: 92px; padding-left: 20px; }
.status .s2 { width: 75px; padding-left: 14px; }
.s3 { width: 59px; }
.s4 { width: 74px; }
.s5 { width: 125px; }
.s6 { width: 41px; }
.s7 { width: 46px; }
.s8 { width: 43px; }
.zoom { margin-left: auto; display: flex; align-items: center; gap: 2px; padding-right: 14px; }
.zm { margin: 0 8px 0 4px; }
.zp { margin: 0 12px 0 8px; }
.zoom input { appearance: none; width: 91px; height: 10px; margin: 0; background: linear-gradient(#fff, #fff) center / 100% 1px no-repeat; }
.zoom input::-webkit-slider-thumb { appearance: none; width: 4px; height: 9px; background: #fff; }
</style>
